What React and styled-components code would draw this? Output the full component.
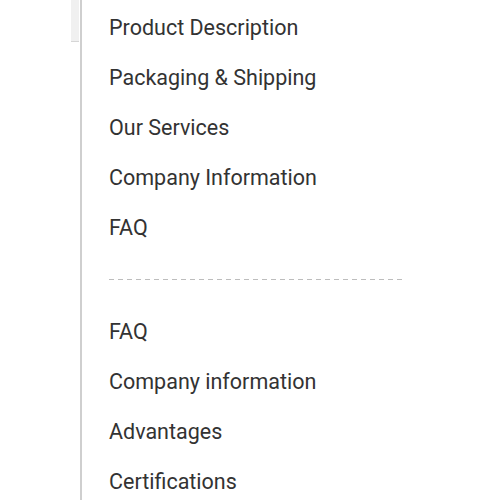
import React from "react";
import styled, { createGlobalStyle } from "styled-components";

const GlobalStyle = createGlobalStyle`
  html, body {
    margin: 0;
    padding: 0;
    background: #fff;
    height: 500px;
    overflow: hidden;
  }
`;

const Page = styled.div`
  display: flex;
  width: 500px;
  height: 500px;
  font-family: Roboto, "Liberation Sans", sans-serif;
`;

const Gutter = styled.div`
  width: 71px;
  flex-shrink: 0;
`;

const Tab = styled.div`
  width: 8px;
  height: 41px;
  background: #f0f0f0;
  border-bottom: 1px solid #d6d6d6;
  flex-shrink: 0;
`;

const Panel = styled.div`
  flex: 1;
  border-left: 2px solid #cfcfcf;
  margin-left: 1px;
  padding: 3px 0 0 27px;
  overflow: hidden;
`;

const List = styled.ul`
  list-style: none;
  margin: 0;
  padding: 0;
`;

const Item = styled.li`
  height: 50px;
  line-height: 50px;
  font-size: 21.5px;
  color: #333;
  white-space: nowrap;
`;

const Divider = styled.div`
  width: 294px;
  height: 1px;
  margin: 26px 0 27px;
  background: repeating-linear-gradient(
    to right,
    #bdbdbd 0,
    #bdbdbd 5px,
    transparent 5px,
    transparent 9px
  );
`;

const first = [
  "Product Description",
  "Packaging & Shipping",
  "Our Services",
  "Company Information",
  "FAQ",
];

const second = ["FAQ", "Company information", "Advantages", "Certifications"];

export default function App() {
  return (
    <>
      <GlobalStyle />
      <Page>
        <Gutter />
        <Tab />
        <Panel>
          <List>
            {first.map((t) => (
              <Item key={t}>{t}</Item>
            ))}
          </List>
          <Divider />
          <List>
            {second.map((t) => (
              <Item key={t}>{t}</Item>
            ))}
          </List>
        </Panel>
      </Page>
    </>
  );
}
